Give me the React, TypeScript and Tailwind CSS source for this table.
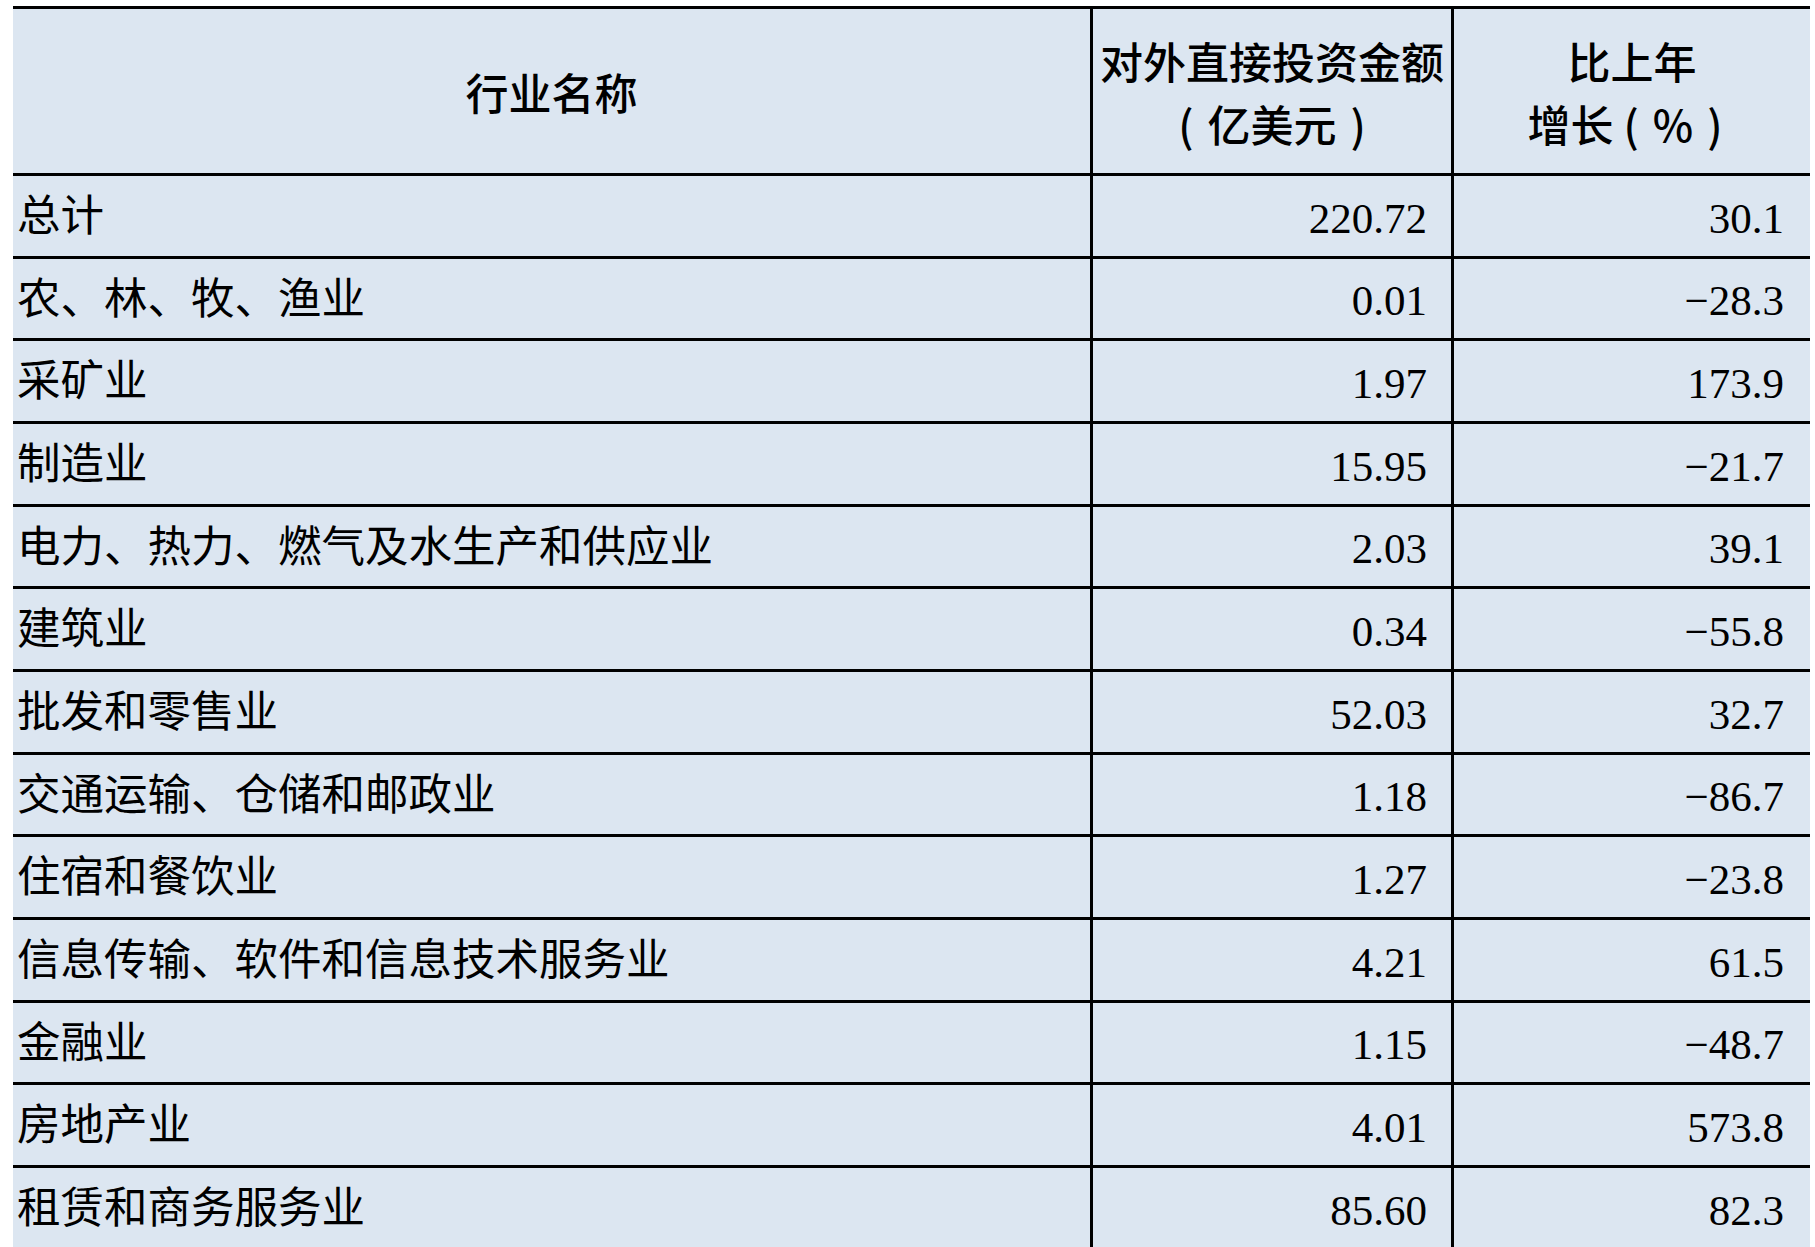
import React from "react";

const rows: [string, string, string][] = [
  ["总计", "220.72", "30.1"],
  ["农、林、牧、渔业", "0.01", "−28.3"],
  ["采矿业", "1.97", "173.9"],
  ["制造业", "15.95", "−21.7"],
  ["电力、热力、燃气及水生产和供应业", "2.03", "39.1"],
  ["建筑业", "0.34", "−55.8"],
  ["批发和零售业", "52.03", "32.7"],
  ["交通运输、仓储和邮政业", "1.18", "−86.7"],
  ["住宿和餐饮业", "1.27", "−23.8"],
  ["信息传输、软件和信息技术服务业", "4.21", "61.5"],
  ["金融业", "1.15", "−48.7"],
  ["房地产业", "4.01", "573.8"],
  ["租赁和商务服务业", "85.60", "82.3"],
];

const cjkSerif = {
  fontFamily: '"Liberation Serif", "Noto Sans CJK SC", serif',
};

export default function App() {
  return (
    <div className="w-[1815px] h-[1247px] overflow-hidden bg-white pl-[13px] pt-[6px]">
      <div className="w-[1797px] bg-[#dce6f1] border-t-[3px] border-black text-black">
        {/* header */}
        <div className="flex h-[164px] font-['Noto_Sans_CJK_SC',sans-serif] text-[43px] font-medium leading-[63px]">
          <div className="w-[1077px] flex items-center justify-center pt-[1px]">
            行业名称
          </div>
          <div className="w-[361px] border-l-[3px] border-black flex flex-col items-center justify-center pt-[1px] whitespace-nowrap">
            <span>对外直接投资金额</span>
            <span className="flex items-center">
              <span className="mr-[14px]">(</span>
              <span>亿美元</span>
              <span className="ml-[14px]">)</span>
            </span>
          </div>
          <div className="w-[359px] border-l-[3px] border-black flex flex-col items-center justify-center pt-[1px] whitespace-nowrap">
            <span>比上年</span>
            <span className="flex items-center pr-[14px]">
              <span>增长</span>
              <span className="ml-[10px] mr-[14px]">(</span>
              <span>%</span>
              <span className="ml-[14px]">)</span>
            </span>
          </div>
        </div>
        {rows.map(([name, amount, growth]) => (
          <div
            key={name}
            className="flex h-[82.67px] border-t-[3px] border-black text-[43px] leading-none"
          >
            <div
              className="w-[1077px] flex items-center pl-[4px] pt-[2px] whitespace-nowrap text-[43.5px]"
              style={cjkSerif}
            >
              {name}
            </div>
            <div className="w-[361px] border-l-[3px] border-black flex items-center justify-end pr-[24px] pt-[5px] font-['Liberation_Serif',serif]">
              {amount}
            </div>
            <div className="w-[359px] border-l-[3px] border-black flex items-center justify-end pr-[26px] pt-[5px] font-['Liberation_Serif',serif]">
              {growth}
            </div>
          </div>
        ))}
      </div>
    </div>
  );
}
